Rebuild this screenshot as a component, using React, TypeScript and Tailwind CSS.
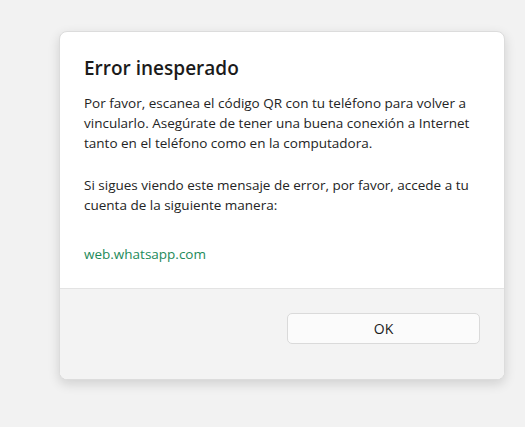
export default function App() {
  return (
    <div
      className="min-h-[427px] w-full bg-[#f2f2f2] pt-[31px] pl-[59px]"
      style={{ fontFamily: '"Open Sans", "Noto Sans", sans-serif' }}
    >
      <div className="w-[446px] overflow-hidden rounded-lg border border-[#dcdcdc] bg-white shadow-[0_4px_12px_rgba(0,0,0,0.14)]">
        {/* body */}
        <div className="px-6 pt-[22px] pb-6">
          <h1 className="text-[19px] leading-7 font-semibold text-[#1b1b1b]">
            Error inesperado
          </h1>
          <p className="mt-[11px] text-[13.5px] leading-5 text-[#242424]">
            Por favor, escanea el código QR con tu teléfono para volver a
            <br />
            vincularlo. Asegúrate de tener una buena conexión a Internet
            <br />
            tanto en el teléfono como en la computadora.
          </p>
          <p className="mt-[22px] text-[13.5px] leading-5 text-[#242424]">
            Si sigues viendo este mensaje de error, por favor, accede a tu
            <br />
            cuenta de la siguiente manera:
          </p>
          <p className="mt-[29px] text-[13.5px] leading-5 text-[#1d8a5a]">
            web.whatsapp.com
          </p>
        </div>
        {/* footer */}
        <div className="flex h-[91px] justify-end border-t border-[#e3e3e3] bg-[#f3f3f3] px-6 pt-6">
          <button className="h-[31px] w-[193px] rounded-[5px] border border-[#dadada] bg-[#fbfbfb] text-[14px] text-[#1b1b1b]">
            OK
          </button>
        </div>
      </div>
    </div>
  );
}
